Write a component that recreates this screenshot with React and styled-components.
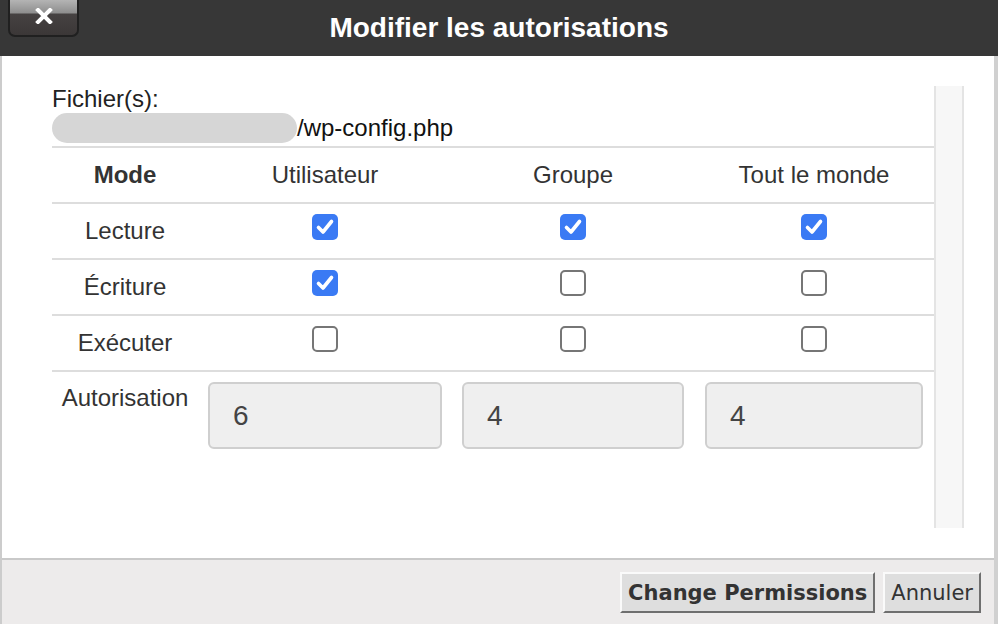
import React from "react";
import styled, { createGlobalStyle } from "styled-components";

const Global = createGlobalStyle`
  html, body { margin: 0; padding: 0; background: #fff; }
  body { font-family: "Liberation Sans", Arial, sans-serif; }
  #root { width: 998px; height: 624px; }
`;

const Frame = styled.div`
  width: 998px;
  height: 624px;
  display: flex;
  flex-direction: column;
  overflow: hidden;
`;

const Header = styled.div`
  height: 56px;
  flex: none;
  background: #373737;
  display: grid;
  grid-template-columns: 1fr auto 1fr;
  align-items: center;
`;

const CloseButton = styled.button`
  justify-self: start;
  align-self: start;
  margin-left: 8px;
  width: 71px;
  height: 37px;
  padding: 0;
  border: 2px solid #202020;
  border-top: none;
  border-radius: 0 0 7px 7px;
  background: linear-gradient(to bottom, #b4b4b4 0, #8e8e8e 13px, #464242 14px, #3b3737 100%);
  display: flex;
  align-items: center;
  justify-content: center;
  padding-bottom: 3px;
`;

const Title = styled.h1`
  margin: 0;
  color: #fff;
  font-size: 28px;
  font-weight: bold;
  font-family: "Liberation Sans", Arial, sans-serif;
`;

const Panel = styled.div`
  flex: 1;
  min-height: 0;
  display: flex;
  flex-direction: column;
  border-left: 2px solid #cccccc;
  border-right: 4px solid #d0d0d0;
`;

const Body = styled.div`
  flex: 1;
  min-height: 0;
  display: flex;
  padding: 30px 30px 30px 50px;
  background: #fff;
`;

const Content = styled.div`
  flex: 1;
  display: flex;
  flex-direction: column;
  color: #333;
  font-size: 24px;
`;

const Track = styled.div`
  width: 26px;
  flex: none;
  background: #f7f7f7;
  border-left: 2px solid #e4e4e4;
  border-right: 2px solid #e4e4e4;
`;

const FileLabel = styled.div`
  line-height: 26px;
  color: #222;
`;

const FileRow = styled.div`
  margin-top: 1px;
  height: 30px;
  display: flex;
  align-items: center;
  color: #111;
`;

const Redacted = styled.span`
  width: 245px;
  height: 30px;
  border-radius: 15px;
  background: #d6d6d6;
`;

const Grid = styled.div`
  margin-top: 3px;
  display: grid;
  grid-template-columns: 146px 254px 242px 240px;
  border-top: 2px solid #dddddd;
`;

const Cell = styled.div`
  height: 54px;
  display: flex;
  align-items: center;
  justify-content: center;
  border-bottom: 2px solid #dddddd;
  line-height: 26px;
  font-weight: ${(p) => (p.$bold ? "bold" : "normal")};
`;

const LabelCell = styled.div`
  display: flex;
  justify-content: center;
  padding-top: 13px;
  line-height: 26px;
`;

const InputCell = styled.div`
  padding: 10px ${(p) => p.$pad || 10}px;
`;

const Octal = styled.div`
  height: 63px;
  border: 2px solid #cfcfcf;
  border-radius: 6px;
  background: #efefef;
  display: flex;
  align-items: center;
  padding-left: 23px;
  font-size: 28px;
  color: #444;
`;

const Box = styled.span`
  width: 26px;
  height: 26px;
  box-sizing: border-box;
  margin-bottom: 8px;
  border-radius: 5px;
  display: flex;
  align-items: center;
  justify-content: center;
  background: ${(p) => (p.$checked ? "#3a7af4" : "#fff")};
  border: ${(p) => (p.$checked ? "none" : "2px solid #767676")};
`;

const Footer = styled.div`
  box-sizing: border-box;
  height: 66px;
  flex: none;
  border-top: 2px solid #c9c9c9;
  background: #edebeb;
  display: flex;
  justify-content: flex-end;
  align-items: flex-start;
  gap: 8px;
  padding: 12px 13px 0 0;
`;

const Button = styled.button`
  height: 41px;
  padding: 0 6px;
  font-family: "DejaVu Sans", Verdana, sans-serif;
  font-size: 21px;
  font-weight: ${(p) => (p.$primary ? "bold" : "normal")};
  color: #333;
  background: #dedede;
  border: 2px solid;
  border-color: #fafafa #6f6f6f #6f6f6f #fafafa;
`;

const Check = ({ checked }) => (
  <Box $checked={checked}>
    {checked && (
      <svg width="26" height="26" viewBox="0 0 26 26">
        <path d="M6.5 13.5 L11 18 L19.5 7.5" fill="none" stroke="#fff" strokeWidth="3.6" strokeLinecap="round" strokeLinejoin="round" />
      </svg>
    )}
  </Box>
);

const rows = [
  { name: "Lecture", v: [true, true, true] },
  { name: "Écriture", v: [true, false, false] },
  { name: "Exécuter", v: [false, false, false] },
];

export default function App() {
  return (
    <Frame>
      <Global />
      <Header>
        <CloseButton aria-label="Fermer">
          <svg width="18" height="16" viewBox="0 0 18 16">
            <path d="M3 2 L15 14 M15 2 L3 14" stroke="#fff" strokeWidth="4" strokeLinecap="square" />
          </svg>
        </CloseButton>
        <Title>Modifier les autorisations</Title>
        <span />
      </Header>
      <Panel>
        <Body>
          <Content>
            <FileLabel>Fichier(s):</FileLabel>
            <FileRow>
              <Redacted />
              <span>/wp-config.php</span>
            </FileRow>
            <Grid>
              <Cell $bold>Mode</Cell>
              <Cell>Utilisateur</Cell>
              <Cell>Groupe</Cell>
              <Cell>Tout le monde</Cell>
              {rows.map((r) => (
                <React.Fragment key={r.name}>
                  <Cell>{r.name}</Cell>
                  {r.v.map((c, i) => (
                    <Cell key={i}>
                      <Check checked={c} />
                    </Cell>
                  ))}
                </React.Fragment>
              ))}
              <LabelCell>Autorisation</LabelCell>
              <InputCell><Octal>6</Octal></InputCell>
              <InputCell><Octal>4</Octal></InputCell>
              <InputCell $pad={11}><Octal>4</Octal></InputCell>
            </Grid>
          </Content>
          <Track />
        </Body>
        <Footer>
          <Button $primary>Change Permissions</Button>
          <Button>Annuler</Button>
        </Footer>
      </Panel>
    </Frame>
  );
}
